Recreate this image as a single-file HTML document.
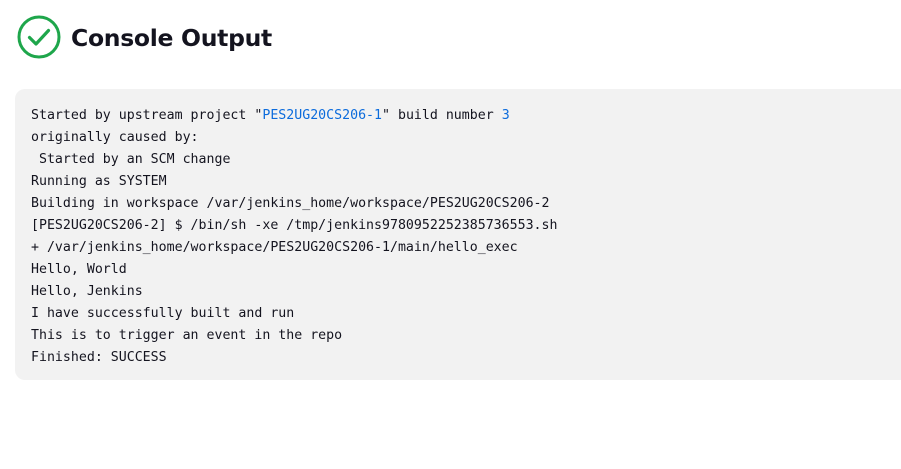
<!DOCTYPE html>
<html><head><meta charset="utf-8"><style>
body{margin:0;background:#fff;width:901px;height:469px;overflow:hidden;font-family:"DejaVu Sans","Liberation Sans",sans-serif;}
svg{position:absolute;left:17px;top:15px}
h1{position:absolute;left:71px;top:20px;margin:0;font-size:23.5px;font-weight:bold;color:#14141f;line-height:36px;letter-spacing:-0.3px}
pre{position:absolute;left:15px;top:89px;width:900px;height:291px;box-sizing:border-box;margin:0;padding:16px 16px;background:#f2f2f2;border-radius:10px;font-family:"DejaVu Sans Mono","Liberation Mono",monospace;font-size:13.25px;line-height:22px;color:#14141f}
a{color:#0b6bdc;text-decoration:none}
</style></head><body>
<svg width="44" height="44" viewBox="0 0 44 44"><circle cx="22" cy="22" r="20" fill="none" stroke="#1ea64b" stroke-width="3"/><path d="M12.5 22.5 L19 29 L31.5 15.5" fill="none" stroke="#1ea64b" stroke-width="3.2" stroke-linecap="round" stroke-linejoin="round"/></svg>
<h1>Console Output</h1>
<pre>Started by upstream project "<a>PES2UG20CS206-1</a>" build number <a>3</a>
originally caused by:
 Started by an SCM change
Running as SYSTEM
Building in workspace /var/jenkins_home/workspace/PES2UG20CS206-2
[PES2UG20CS206-2] $ /bin/sh -xe /tmp/jenkins9780952252385736553.sh
+ /var/jenkins_home/workspace/PES2UG20CS206-1/main/hello_exec
Hello, World
Hello, Jenkins
I have successfully built and run
This is to trigger an event in the repo
Finished: SUCCESS</pre>
</body></html>
